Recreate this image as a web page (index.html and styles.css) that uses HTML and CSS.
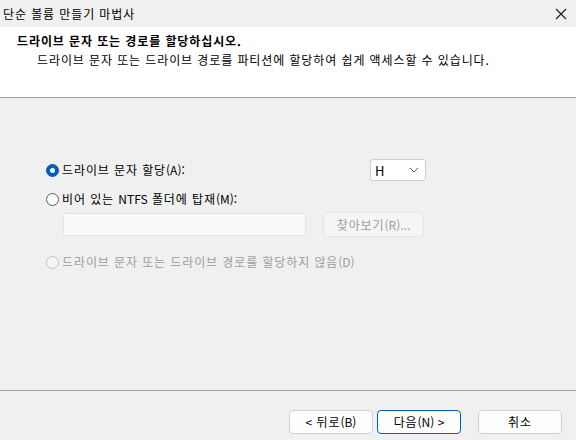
FILE: index.html
```html
<!DOCTYPE html>
<html lang="ko">
<head>
<meta charset="utf-8">
<link rel="stylesheet" href="styles.css">
</head>
<body>
<div class="window">
  <div class="titlebar">
    <span class="title">단순 볼륨 만들기 마법사</span>
    <svg class="close" width="12" height="12" viewBox="0 0 12 12"><path d="M1 1L11 11M11 1L1 11" stroke="#1a1a1a" stroke-width="1.1" fill="none"/></svg>
  </div>
  <div class="header">
    <div class="h-title">드라이브 문자 또는 경로를 할당하십시오.</div>
    <div class="h-sub">드라이브 문자 또는 드라이브 경로를 파티션에 할당하여 쉽게 액세스할 수 있습니다.</div>
  </div>
  <div class="content">
    <div class="row row1">
      <label class="opt"><span class="radio checked"></span><span>드라이브 문자 할당<span class="l">(A):</span></span></label>
      <div class="select"><span>H</span><svg width="10" height="6" viewBox="0 0 10 6"><path d="M1 1L5 5L9 1" stroke="#555" stroke-width="1" fill="none"/></svg></div>
    </div>
    <div class="row row2">
      <label class="opt"><span class="radio"></span><span>비어 있는 <span class="l">NTFS</span> 폴더에 탑재<span class="l">(M):</span></span></label>
    </div>
    <div class="row row3">
      <div class="textbox"></div>
      <div class="browse">찾아보기<span class="l">(R)...</span></div>
    </div>
    <div class="row row4">
      <label class="opt disabled"><span class="radio"></span><span>드라이브 문자 또는 드라이브 경로를 할당하지 않음<span class="l">(D)</span></span></label>
    </div>
  </div>
  <div class="footer">
    <div class="btn back"><span class="l">&lt;</span>&nbsp;뒤로<span class="l">(B)</span></div>
    <div class="btn next">다음<span class="l">(N) &gt;</span></div>
    <div class="btn cancel">취소</div>
  </div>
</div>
</body>
</html>
```

FILE: styles.css
```css
* { box-sizing: border-box; }
html, body { margin: 0; padding: 0; }
body {
  width: 576px;
  height: 440px;
  overflow: hidden;
  font-family: "Noto Sans CJK KR", "Noto Sans", sans-serif;
  font-size: 12px;
  letter-spacing: 0.9px;
  color: #000;
  background: #f0f0f0;
}
.l { letter-spacing: 0; }
.window { display: flex; flex-direction: column; height: 440px; }
.titlebar {
  height: 27px;
  background: #f0f0f0;
  display: flex;
  align-items: center;
  justify-content: space-between;
  padding: 0 9px 0 3px;
}
.title { font-size: 12px; line-height: 16px; }
.close { display: block; }
.header {
  height: 71px;
  background: #fff;
  padding: 6px 0 0 17px;
  border-bottom: 1px solid #a0a0a0;
  box-shadow: 0 1px 0 #e8e8e8;
}
.h-title { font-weight: bold; line-height: 16px; }
.h-sub { padding-left: 20px; line-height: 16px; margin-top: 3px; }
.content {
  height: 292px;
  padding: 61px 0 0 46px;
  display: flex;
  flex-direction: column;
}
.row { display: flex; align-items: center; }
.row1 { height: 22px; width: 380px; justify-content: space-between; }
.row2 { height: 20px; margin-top: 8px; }
.row3 { height: 25px; margin-top: 3px; padding-left: 17px; gap: 17px; }
.row4 { height: 20px; margin-top: 15px; }
.opt { display: flex; align-items: center; gap: 3px; line-height: 16px; }
.radio {
  width: 13px; height: 13px;
  border-radius: 50%;
  border: 1px solid #5f5f5f;
  background: #fbfbfb;
  display: inline-block;
  position: relative;
}
.radio.checked {
  border-color: #005fb8;
  background: #005fb8;
}
.radio.checked::after {
  content: "";
  position: absolute;
  left: 3px; top: 3px;
  width: 5px; height: 5px;
  border-radius: 50%;
  background: #fff;
}
.disabled { color: #9d9d9d; }
.disabled .radio { border-color: #c4c4c4; background: #f5f5f5; }
.select {
  width: 56px; height: 22px;
  background: #fff;
  border: 1px solid #cfcfcf;
  border-radius: 3px;
  display: flex;
  align-items: center;
  justify-content: space-between;
  padding: 0 6px 0 4px;
  font-size: 13px;
  letter-spacing: 0;
}
.textbox {
  width: 243px; height: 23px;
  background: #f9f9f9;
  border: 1px solid #e3e3e3;
  border-radius: 2px;
}
.browse {
  width: 101px; height: 25px;
  background: #f5f5f5;
  border: 1px solid #e5e5e5;
  border-radius: 4px;
  color: #9d9d9d;
  display: flex; align-items: center; justify-content: center;
}
.footer {
  flex: 1;
  border-top: 1px solid #a0a0a0;
  display: flex;
  justify-content: flex-end;
  align-items: flex-start;
  padding: 19px 14px 0 0;
}
.btn {
  width: 84px; height: 24px;
  background: #fdfdfd;
  border: 1px solid #d0d0d0;
  border-radius: 4px;
  display: flex; align-items: center; justify-content: center;
  line-height: 16px;
  white-space: pre;
}
.next { margin-left: 4px; border-color: #005fb8; }
.cancel { margin-left: 17px; }
```
